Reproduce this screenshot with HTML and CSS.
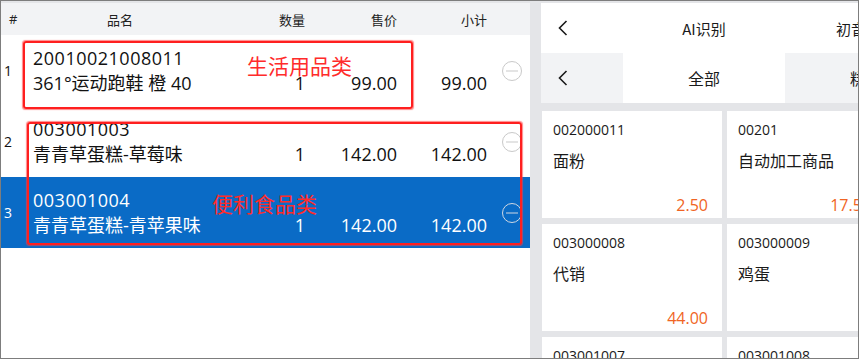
FILE: index.html
```html
<!DOCTYPE html>
<html lang="zh-CN">
<head>
<meta charset="utf-8">
<title>收银</title>
<link rel="stylesheet" href="styles.css">
</head>
<body>
<div class="frame">
  <section class="cart">
    <div class="thead">
      <span class="c-num h-num">#</span>
      <span class="c-name h-name">品名</span>
      <span class="c-qty">数量</span>
      <span class="c-price">售价</span>
      <span class="c-sub">小计</span>
      <span class="c-act"></span>
    </div>
    <div class="row">
      <span class="c-num">1</span>
      <span class="c-name"><span class="code">20010021008011</span><span class="title">361°运动跑鞋 橙 40</span></span>
      <span class="c-qty num">1</span>
      <span class="c-price num">99.00</span>
      <span class="c-sub num">99.00</span>
      <span class="c-act"><svg class="minus" width="22" height="22" viewBox="0 0 22 22"><circle cx="11" cy="11" r="9.5"/><line x1="5" y1="11" x2="17" y2="11"/></svg></span>
    </div>
    <div class="row">
      <span class="c-num">2</span>
      <span class="c-name"><span class="code">003001003</span><span class="title">青青草蛋糕-草莓味</span></span>
      <span class="c-qty num">1</span>
      <span class="c-price num">142.00</span>
      <span class="c-sub num">142.00</span>
      <span class="c-act"><svg class="minus" width="22" height="22" viewBox="0 0 22 22"><circle cx="11" cy="11" r="9.5"/><line x1="5" y1="11" x2="17" y2="11"/></svg></span>
    </div>
    <div class="row selected">
      <span class="c-num">3</span>
      <span class="c-name"><span class="code">003001004</span><span class="title">青青草蛋糕-青苹果味</span></span>
      <span class="c-qty num">1</span>
      <span class="c-price num">142.00</span>
      <span class="c-sub num">142.00</span>
      <span class="c-act"><svg class="minus" width="22" height="22" viewBox="0 0 22 22"><circle cx="11" cy="11" r="9.5"/><line x1="5" y1="11" x2="17" y2="11"/></svg></span>
    </div>
  </section>

  <section class="catalog">
    <div class="bar topbar">
      <span class="back"><svg width="10" height="16" viewBox="0 0 10 16"><path d="M8.5 1 L1.5 8 L8.5 15"/></svg></span>
      <span class="tab">AI识别</span>
      <span class="tab">初音饮品</span>
    </div>
    <div class="bar cats">
      <span class="back"><svg width="10" height="16" viewBox="0 0 10 16"><path d="M8.5 1 L1.5 8 L8.5 15"/></svg></span>
      <span class="tab active">全部</span>
      <span class="tab">糕点</span>
    </div>
    <div class="grid">
      <div class="card"><span class="p-code">002000011</span><span class="p-name">面粉</span><span class="p-price">2.50</span></div>
      <div class="card"><span class="p-code">00201</span><span class="p-name">自动加工商品</span><span class="p-price">17.50</span></div>
      <div class="card"><span class="p-code">003000008</span><span class="p-name">代销</span><span class="p-price">44.00</span></div>
      <div class="card"><span class="p-code">003000009</span><span class="p-name">鸡蛋</span><span class="p-price"></span></div>
      <div class="card"><span class="p-code">003001007</span><span class="p-name">青青草蛋糕</span><span class="p-price"></span></div>
      <div class="card"><span class="p-code">003001008</span><span class="p-name">青青草蛋糕</span><span class="p-price"></span></div>
    </div>
  </section>

  <div class="mark mark-1"></div>
  <div class="mark mark-2"></div>
  <span class="mark-label label-1">生活用品类</span>
  <span class="mark-label label-2">便利食品类</span>
</div>
</body>
</html>
```

FILE: styles.css
```css
* { box-sizing: border-box; }
html, body { margin: 0; padding: 0; }
body {
  font-family: "Open Sans", "Noto Sans CJK SC", sans-serif;
  color: #1a1a1a;
  background: #fff;
}
.frame {
  position: relative;
  width: 859px;
  height: 359px;
  border: 1px solid #7d7d7d;
  background: #e4e5e8;
  padding-top: 2px;
  display: flex;
  gap: 11px;
  overflow: hidden;
}

/* cart */
.cart {
  width: 529px;
  flex: none;
  background: #fff;
  display: flex;
  flex-direction: column;
}
.thead {
  flex: none;
  height: 32px;
  background: #f2f3f5;
  display: flex;
  align-items: center;
  font-family: "Noto Sans CJK SC", sans-serif;
  font-size: 13px;
  color: #222;
}
.thead .h-num { padding-left: 8px; font-family: "Open Sans", sans-serif; font-size: 13px; }
.thead .h-name { text-align: center; }
.c-num { width: 32px; flex: none; padding-left: 3px; font-size: 14px; }
.c-name { width: 174px; flex: none; display: flex; flex-direction: column; }
.c-qty { width: 98px; flex: none; text-align: right; }
.c-price { width: 92px; flex: none; text-align: right; }
.c-sub { width: 90px; flex: none; text-align: right; }
.c-act { width: 43px; flex: none; display: flex; padding-left: 14px; }

.row {
  flex: none;
  height: 71px;
  display: flex;
  align-items: center;
  font-size: 18px;
  line-height: 25px;
  color: #111;
}
.row .num { align-self: center; padding-top: 25px; }
.row .c-num { line-height: 20px; }
.code { letter-spacing: 0.5px; white-space: nowrap; }
.title { white-space: nowrap; }
.row.selected { background: #0a6bc6; color: #fff; }
.minus circle { fill: none; stroke: #c9c9c9; stroke-width: 1; }
.minus line { stroke: #c9c9c9; stroke-width: 1; }
.selected .minus circle, .selected .minus line { stroke: #cfd8e3; }

/* catalog */
.catalog {
  flex: none;
  width: 317px;
  display: flex;
  flex-direction: column;
  overflow: hidden;
}
.bar {
  flex: none;
  height: 50px;
  display: flex;
  align-items: center;
  font-family: "Noto Sans CJK SC", sans-serif;
  color: #1a1a1a;
}
.topbar { background: #fff; font-size: 15px; }
.cats { background: #f2f3f5; font-size: 16px; }
.back {
  width: 82px;
  flex: none;
  height: 100%;
  display: flex;
  align-items: center;
  padding-left: 17px;
}
.back path { fill: none; stroke: #1a1a1a; stroke-width: 1.6; }
.tab {
  width: 162px;
  flex: none;
  height: 100%;
  display: flex;
  align-items: center;
  justify-content: center;
  white-space: nowrap;
}
.tab.active { background: #fff; }

.grid {
  flex: none;
  padding: 8px 0 0 1px;
  display: grid;
  grid-template-columns: 180px 158px;
  grid-auto-rows: 107px;
  column-gap: 5px;
  row-gap: 6px;
}
.card {
  background: #fff;
  display: flex;
  flex-direction: column;
  padding: 9px 14px 2px 11px;
  font-family: "Open Sans", "Noto Sans CJK SC", sans-serif;
}
.p-code { font-size: 14px; line-height: 20px; white-space: nowrap; }
.p-name {
  font-family: "Noto Sans CJK SC", sans-serif;
  font-size: 16px;
  line-height: 22px;
  margin-top: 9px;
  white-space: nowrap;
}
.p-price {
  margin-top: auto;
  text-align: right;
  font-size: 16px;
  line-height: 22px;
  color: #f06424;
  white-space: nowrap;
}

/* annotations */
.mark {
  position: absolute;
  border: 2px solid #ff1f1f;
  border-radius: 3px;
  box-shadow: 0 0 1px 0.5px rgba(255, 60, 60, 0.6);
}
.mark-1 { left: 22px; top: 40px; width: 390px; height: 68px; }
.mark-2 { left: 26px; top: 121px; width: 495px; height: 123px; }
.mark-label {
  position: absolute;
  font-family: "Noto Sans CJK SC", sans-serif;
  font-size: 21px;
  line-height: 24px;
  color: #ff2b2b;
  white-space: nowrap;
}
.label-1 { left: 246px; top: 52px; }
.label-2 { left: 211px; top: 190px; }
```
